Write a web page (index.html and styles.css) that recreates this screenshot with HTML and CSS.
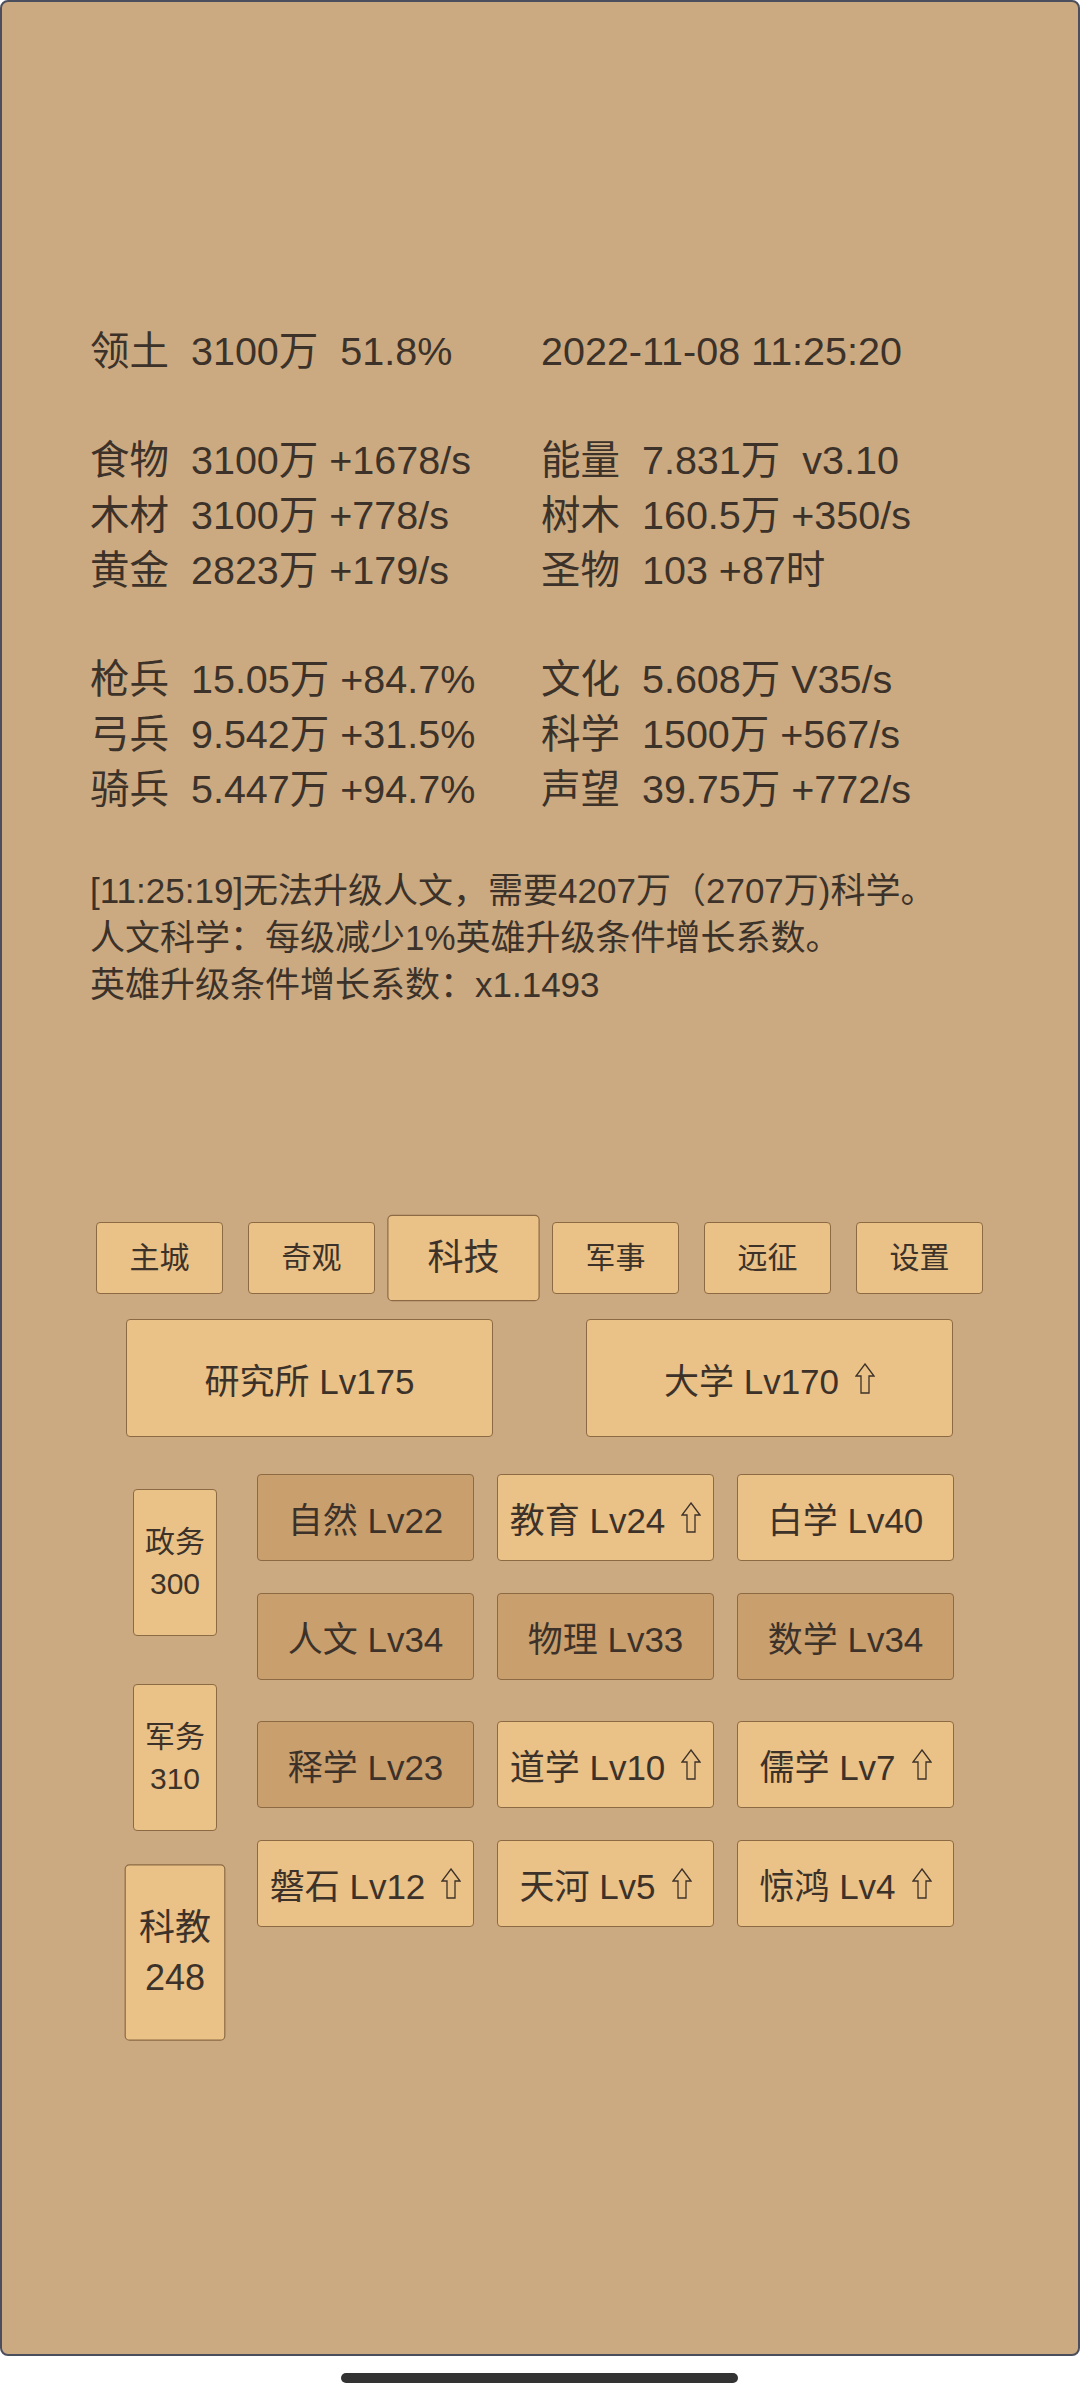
FILE: index.html
```html
<!DOCTYPE html>
<html lang="zh">
<head>
<meta charset="utf-8">
<title>科技</title>
<link rel="stylesheet" href="styles.css">
</head>
<body>
<div class="screen">
  <section class="stats">
    <div class="cell">领土  3100万  51.8%</div><div class="cell">2022-11-08 11:25:20</div>
    <div class="cell"></div><div class="cell"></div>
    <div class="cell">食物  3100万 +1678/s</div><div class="cell">能量  7.831万  v3.10</div>
    <div class="cell">木材  3100万 +778/s</div><div class="cell">树木  160.5万 +350/s</div>
    <div class="cell">黄金  2823万 +179/s</div><div class="cell">圣物  103 +87时</div>
    <div class="cell"></div><div class="cell"></div>
    <div class="cell">枪兵  15.05万 +84.7%</div><div class="cell">文化  5.608万 V35/s</div>
    <div class="cell">弓兵  9.542万 +31.5%</div><div class="cell">科学  1500万 +567/s</div>
    <div class="cell">骑兵  5.447万 +94.7%</div><div class="cell">声望  39.75万 +772/s</div>
  </section>

  <section class="log">
    <p>[11:25:19]无法升级人文，需要4207万（2707万)科学。</p>
    <p>人文科学：每级减少1%英雄升级条件增长系数。</p>
    <p>英雄升级条件增长系数：x1.1493</p>
  </section>

  <nav class="tabs">
    <div class="btn tab">主城</div>
    <div class="btn tab">奇观</div>
    <div class="btn tab active">科技</div>
    <div class="btn tab">军事</div>
    <div class="btn tab">远征</div>
    <div class="btn tab">设置</div>
  </nav>

  <div class="bigrow">
    <div class="btn big">研究所 Lv175</div>
    <div class="btn big">大学 Lv170<svg class="up" viewBox="0 0 20 31"><path d="M10 1 L19 13 L14 13 L14 30 L6 30 L6 13 L1 13 Z"/></svg></div>
  </div>

  <div class="lower">
    <div class="side">
      <div class="btn sidebtn">政务<br>300</div>
      <div class="btn sidebtn">军务<br>310</div>
      <div class="btn sidebtn active">科教<br>248</div>
    </div>
    <div class="techs">
      <div class="group">
        <div class="btn tech dark">自然 Lv22</div>
        <div class="btn tech">教育 Lv24<svg class="up" viewBox="0 0 20 31"><path d="M10 1 L19 13 L14 13 L14 30 L6 30 L6 13 L1 13 Z"/></svg></div>
        <div class="btn tech">白学 Lv40</div>
        <div class="btn tech dark">人文 Lv34</div>
        <div class="btn tech dark">物理 Lv33</div>
        <div class="btn tech dark">数学 Lv34</div>
      </div>
      <div class="group">
        <div class="btn tech dark">释学 Lv23</div>
        <div class="btn tech">道学 Lv10<svg class="up" viewBox="0 0 20 31"><path d="M10 1 L19 13 L14 13 L14 30 L6 30 L6 13 L1 13 Z"/></svg></div>
        <div class="btn tech">儒学 Lv7<svg class="up" viewBox="0 0 20 31"><path d="M10 1 L19 13 L14 13 L14 30 L6 30 L6 13 L1 13 Z"/></svg></div>
        <div class="btn tech">磐石 Lv12<svg class="up" viewBox="0 0 20 31"><path d="M10 1 L19 13 L14 13 L14 30 L6 30 L6 13 L1 13 Z"/></svg></div>
        <div class="btn tech">天河 Lv5<svg class="up" viewBox="0 0 20 31"><path d="M10 1 L19 13 L14 13 L14 30 L6 30 L6 13 L1 13 Z"/></svg></div>
        <div class="btn tech">惊鸿 Lv4<svg class="up" viewBox="0 0 20 31"><path d="M10 1 L19 13 L14 13 L14 30 L6 30 L6 13 L1 13 Z"/></svg></div>
      </div>
    </div>
  </div>
</div>
<div class="homebar"></div>
</body>
</html>
```

FILE: styles.css
```css
html, body {
  margin: 0;
  padding: 0;
  background: #ffffff;
}

body {
  width: 1080px;
  height: 2400px;
  overflow: hidden;
  font-family: "Liberation Sans", "Noto Sans CJK SC", sans-serif;
  color: #3c3229;
}

.screen {
  box-sizing: border-box;
  width: 1080px;
  height: 2356px;
  border: 2px solid #4b4e5d;
  border-radius: 8px;
  background: #cbaa82;
  padding-top: 322px;
}

.stats {
  display: grid;
  grid-template-columns: 451px 1fr;
  grid-auto-rows: 54.7px;
  padding-left: 88px;
  font-size: 39.5px;
  line-height: 54.7px;
}

.cell {
  white-space: pre;
}

.log {
  margin-top: 51px;
  padding-left: 88px;
  font-size: 35px;
  line-height: 47px;
}

.log p {
  margin: 0;
  white-space: nowrap;
}

.btn {
  box-sizing: border-box;
  display: flex;
  align-items: center;
  justify-content: center;
  background: #eac187;
  border: 1.5px solid #8c6a44;
  border-radius: 4px;
  white-space: nowrap;
}

.btn.dark {
  background: #c99f6e;
}

.tabs {
  margin-top: 214px;
  display: flex;
  justify-content: center;
  gap: 25px;
  padding-right: 1px;
}

.tab {
  width: 127px;
  height: 72px;
  font-size: 30px;
  line-height: 1;
}

.active {
  transform: scale(1.2);
}

.bigrow {
  margin-top: 25px;
  display: flex;
  justify-content: center;
  gap: 93px;
  padding-right: 1px;
}

.big {
  width: 367px;
  height: 118px;
  font-size: 35px;
}

.up {
  width: 20px;
  height: 31px;
  margin-left: 16px;
  flex: none;
}

.up path {
  fill: none;
  stroke: #3c3229;
  stroke-width: 1.3;
  stroke-linejoin: miter;
}

.lower {
  margin-top: 37px;
  display: flex;
  padding-left: 131px;
  gap: 40px;
}

.side {
  margin-top: 15px;
  display: flex;
  flex-direction: column;
  gap: 48px;
}

.sidebtn {
  width: 84px;
  height: 147px;
  font-size: 30px;
  line-height: 42px;
  text-align: center;
}

.techs {
  display: flex;
  flex-direction: column;
  gap: 41px;
}

.group {
  display: grid;
  grid-template-columns: repeat(3, 217px);
  grid-auto-rows: 87px;
  column-gap: 23px;
  row-gap: 32px;
}

.tech {
  font-size: 35px;
}

.homebar {
  width: 397px;
  height: 10px;
  margin: 17px 0 0 341px;
  border-radius: 5px;
  background: #333333;
}
```
